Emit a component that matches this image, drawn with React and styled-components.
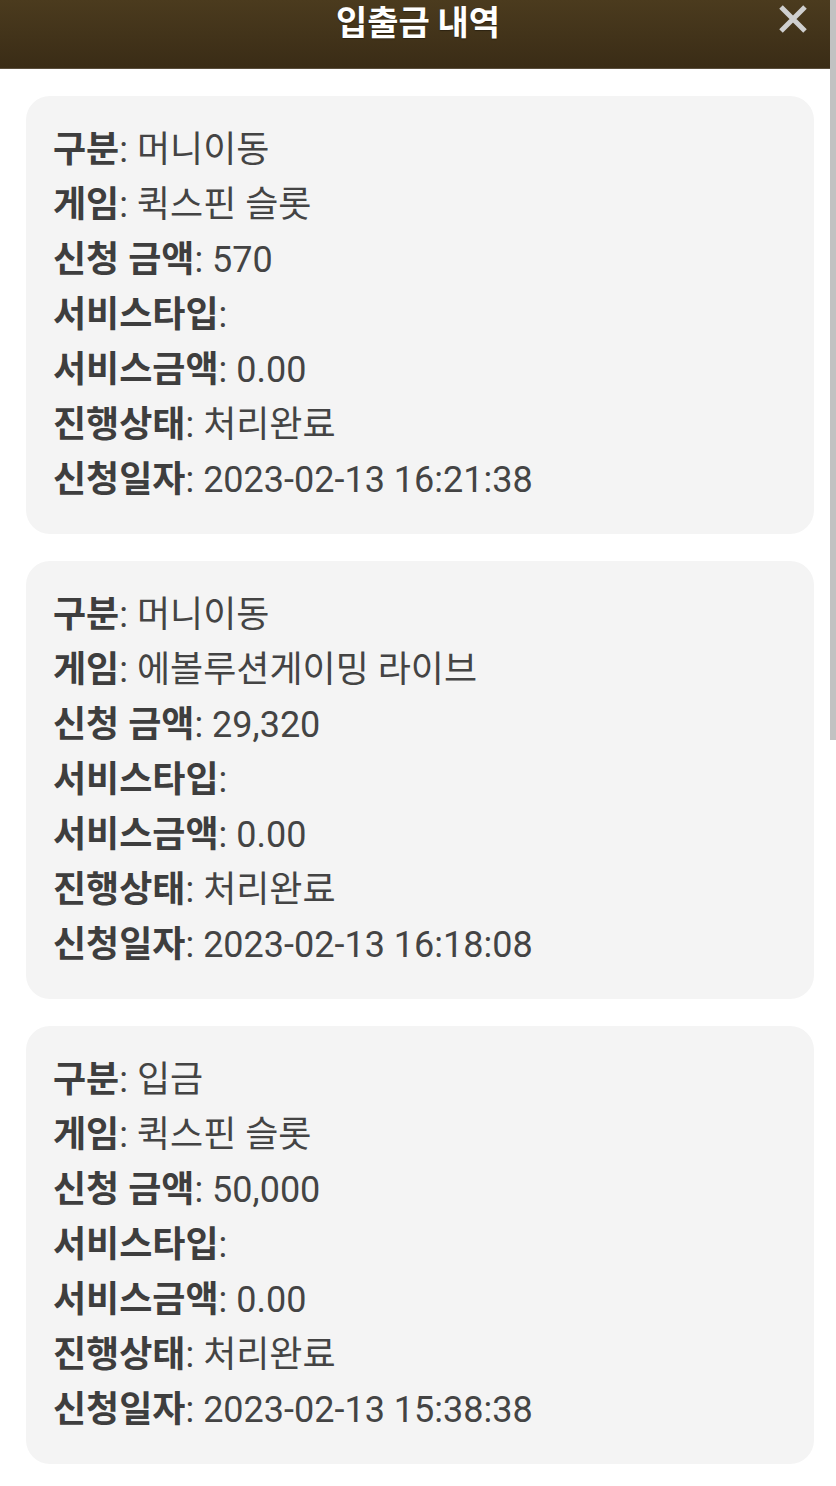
import React from "react";
import styled, { createGlobalStyle } from "styled-components";

const Global = createGlobalStyle`
  html, body { margin: 0; padding: 0; background: #ffffff; }
  body { font-family: Roboto, "Noto Sans CJK KR", sans-serif; }
`;

const Page = styled.div`
  width: 836px;
  min-height: 1486px;
  position: relative;
  background: #fff;
  overflow: hidden;
`;

const Header = styled.header`
  height: 69px;
  background: linear-gradient(180deg, #4b3b1e 0%, #3a2c16 100%);
  border-bottom: 1px solid #5a4e3c;
  box-sizing: border-box;
  display: flex;
  justify-content: center;
  align-items: flex-start;
  position: relative;
`;

const Title = styled.h1`
  margin: 0;
  color: #fff;
  font-family: "Noto Sans CJK KR", sans-serif;
  font-weight: 700;
  font-size: 34px;
  line-height: 42px;
  text-shadow: 0 1px 1px rgba(0,0,0,0.35);
`;

const Close = styled.button`
  position: absolute;
  right: 28px;
  top: 4px;
  width: 30px;
  height: 30px;
  padding: 0;
  border: 0;
  background: transparent;
  display: flex;
  align-items: center;
  justify-content: center;
`;

const List = styled.main`
  display: flex;
  flex-direction: column;
  gap: 27px;
  padding: 27px 22px 24px 26px;
`;

const Card = styled.section`
  background: #f4f4f4;
  border-radius: 24px;
  padding: 27px 27px 26px;
`;

const Row = styled.div`
  font-size: 36px;
  line-height: 55px;
  color: #444;
  white-space: nowrap;
`;

const Label = styled.b`
  font-weight: 700;
  color: #3e3e3e;
`;

const Scrollbar = styled.div`
  position: absolute;
  right: 0;
  top: 0;
  width: 6px;
  height: 740px;
  background: #c2c2c2;
`;

const records = [
  { type: "머니이동", game: "퀵스핀 슬롯", amount: "570", date: "2023-02-13 16:21:38" },
  { type: "머니이동", game: "에볼루션게이밍 라이브", amount: "29,320", date: "2023-02-13 16:18:08" },
  { type: "입금", game: "퀵스핀 슬롯", amount: "50,000", date: "2023-02-13 15:38:38" },
];

export default function App() {
  return (
    <Page>
      <Global />
      <Header>
        <Title>입출금 내역</Title>
        <Close aria-label="닫기">
          <svg width="30" height="30" viewBox="0 0 30 30">
            <path d="M3 3 L27 27 M27 3 L3 27" stroke="#cfcfcf" strokeWidth="5" strokeLinecap="butt" />
          </svg>
        </Close>
      </Header>
      <List>
        {records.map((r, i) => (
          <Card key={i}>
            <Row><Label>구분</Label>: {r.type}</Row>
            <Row><Label>게임</Label>: {r.game}</Row>
            <Row><Label>신청 금액</Label>: {r.amount}</Row>
            <Row><Label>서비스타입</Label>:</Row>
            <Row><Label>서비스금액</Label>: 0.00</Row>
            <Row><Label>진행상태</Label>: 처리완료</Row>
            <Row><Label>신청일자</Label>: {r.date}</Row>
          </Card>
        ))}
      </List>
      <Scrollbar />
    </Page>
  );
}
